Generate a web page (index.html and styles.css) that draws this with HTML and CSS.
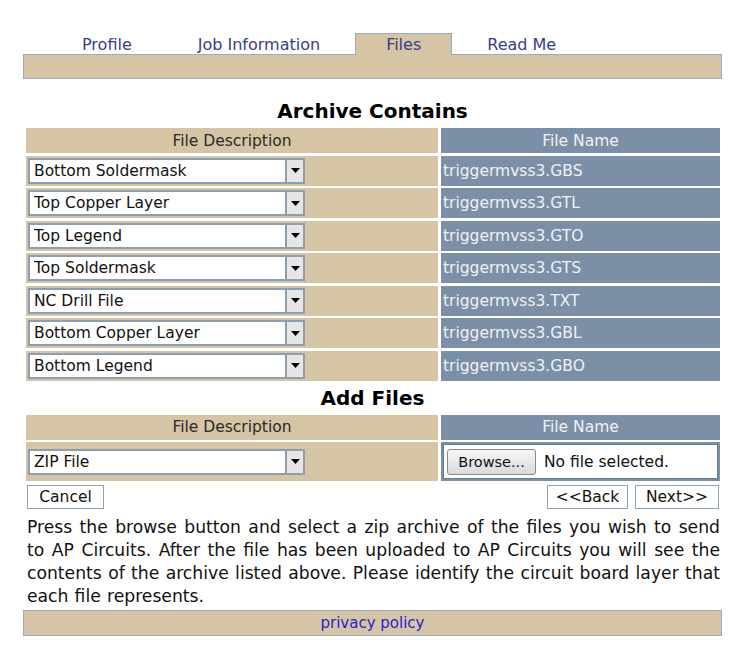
FILE: index.html
```html
<!DOCTYPE html>
<html>
<head>
<meta charset="utf-8">
<title>Files</title>
<link rel="stylesheet" href="styles.css">
</head>
<body>
<div class="page">
  <nav class="tabs">
    <a class="tab">Profile</a>
    <a class="tab">Job Information</a>
    <a class="tab active">Files</a>
    <a class="tab">Read Me</a>
  </nav>
  <div class="tabbar"></div>

  <h2 class="title">Archive Contains</h2>
  <div class="grid">
    <div class="cell head desc">File Description</div><div class="cell head name">File Name</div>
    <div class="cell desc"><div class="sel"><select><option>Bottom Soldermask</option></select><span class="arrow"><svg width="9" height="5" viewBox="0 0 9 5"><path d="M0 0h9L4.5 5z" fill="#000"/></svg></span></div></div><div class="cell name">triggermvss3.GBS</div>
    <div class="cell desc"><div class="sel"><select><option>Top Copper Layer</option></select><span class="arrow"><svg width="9" height="5" viewBox="0 0 9 5"><path d="M0 0h9L4.5 5z" fill="#000"/></svg></span></div></div><div class="cell name">triggermvss3.GTL</div>
    <div class="cell desc"><div class="sel"><select><option>Top Legend</option></select><span class="arrow"><svg width="9" height="5" viewBox="0 0 9 5"><path d="M0 0h9L4.5 5z" fill="#000"/></svg></span></div></div><div class="cell name">triggermvss3.GTO</div>
    <div class="cell desc"><div class="sel"><select><option>Top Soldermask</option></select><span class="arrow"><svg width="9" height="5" viewBox="0 0 9 5"><path d="M0 0h9L4.5 5z" fill="#000"/></svg></span></div></div><div class="cell name">triggermvss3.GTS</div>
    <div class="cell desc"><div class="sel"><select><option>NC Drill File</option></select><span class="arrow"><svg width="9" height="5" viewBox="0 0 9 5"><path d="M0 0h9L4.5 5z" fill="#000"/></svg></span></div></div><div class="cell name">triggermvss3.TXT</div>
    <div class="cell desc"><div class="sel"><select><option>Bottom Copper Layer</option></select><span class="arrow"><svg width="9" height="5" viewBox="0 0 9 5"><path d="M0 0h9L4.5 5z" fill="#000"/></svg></span></div></div><div class="cell name">triggermvss3.GBL</div>
    <div class="cell desc"><div class="sel"><select><option>Bottom Legend</option></select><span class="arrow"><svg width="9" height="5" viewBox="0 0 9 5"><path d="M0 0h9L4.5 5z" fill="#000"/></svg></span></div></div><div class="cell name">triggermvss3.GBO</div>
  </div>

  <h2 class="title title-add">Add Files</h2>
  <div class="grid grid-add">
    <div class="cell head desc">File Description</div><div class="cell head name">File Name</div>
    <div class="cell desc tall"><div class="sel"><select><option>ZIP File</option></select><span class="arrow"><svg width="9" height="5" viewBox="0 0 9 5"><path d="M0 0h9L4.5 5z" fill="#000"/></svg></span></div></div>
    <div class="cell name tall"><div class="filebox"><button class="browse">Browse...</button><span class="nofile">No file selected.</span></div></div>
  </div>

  <div class="actions">
    <button class="btn btn-cancel">Cancel</button>
    <div class="nav-btns">
      <button class="btn btn-back">&lt;&lt;Back</button>
      <button class="btn btn-next">Next&gt;&gt;</button>
    </div>
  </div>

  <p class="help">Press the browse button and select a zip archive of the files you wish to send to AP Circuits. After the file has been uploaded to AP Circuits you will see the contents of the archive listed above. Please identify the circuit board layer that each file represents.</p>

  <div class="footer"><a class="privacy" href="#">privacy policy</a></div>
</div>
</body>
</html>
```

FILE: styles.css
```css
html, body {
  margin: 0;
  padding: 0;
  background: #ffffff;
}
body {
  font-family: "DejaVu Sans", Verdana, sans-serif;
  font-size: 15.5px;
  color: #222;
}
.page {
  width: 699px;
  margin-left: 23px;
  padding-top: 33px;
}
.tabs {
  display: flex;
  gap: 4px;
  padding-left: 28px;
  height: 21px;
  align-items: flex-end;
}
.tab {
  display: block;
  padding: 0 31px;
  height: 21px;
  line-height: 23px;
  color: #3b3b8c;
  font-size: 16px;
  box-sizing: border-box;
}
.tab.active {
  background: #d6c5a5;
  border: 1px solid #9aabbf;
  border-bottom: none;
  padding: 0 30px;
  height: 22px;
  line-height: 22px;
  margin-bottom: -1px;
  position: relative;
  z-index: 1;
}
.tabbar {
  height: 25px;
  box-sizing: border-box;
  background: #d6c5a5;
  border: 1px solid #9aabbf;
}
.title {
  margin: 0;
  text-align: center;
  font-size: 20px;
  font-weight: bold;
  color: #000;
  line-height: 24px;
  padding-top: 20px;
}
.title-add {
  padding-top: 6px;
  line-height: 22px;
}
.grid {
  display: grid;
  grid-template-columns: 412px 279px;
  grid-auto-rows: 30px;
  grid-template-rows: 25px;
  column-gap: 3px;
  row-gap: 2.5px;
  margin: 5px 0 0 3px;
}
.grid-add {
  margin-top: 6px;
  grid-auto-rows: 39px;
}
.cell {
  display: flex;
  align-items: center;
}
.head {
  justify-content: center;
  font-size: 15.5px;
}
.desc {
  background: #d6c5a5;
  color: #2a2a2a;
  padding-left: 2px;
}
.head.desc {
  padding-left: 0;
}
.name {
  background: #7b90a6;
  color: #eef2f6;
  padding-left: 2px;
}
.head.name {
  padding-left: 0;
}
.sel {
  position: relative;
  width: 277px;
  height: 26px;
}
.sel select {
  -webkit-appearance: none;
  appearance: none;
  display: block;
  width: 277px;
  height: 26px;
  box-sizing: border-box;
  border: 2px solid #8e9db0;
  border-radius: 0;
  background: #fff;
  font-family: "DejaVu Sans", Verdana, sans-serif;
  font-size: 15.5px;
  color: #111;
  padding: 0 0 0 4px;
  margin: 0;
}
.sel .arrow {
  position: absolute;
  right: 2px;
  top: 2px;
  width: 18px;
  height: 22px;
  box-sizing: border-box;
  background: #e6e6e6;
  border-left: 2px solid #8e9db0;
  display: flex;
  align-items: center;
  justify-content: center;
  pointer-events: none;
}
.filebox {
  display: flex;
  align-items: center;
  gap: 8px;
  width: 275px;
  height: 35px;
  box-sizing: border-box;
  background: #fff;
  border: 1px solid #667c94;
  padding-left: 3px;
}
.browse {
  font-family: "DejaVu Sans", Verdana, sans-serif;
  font-size: 14.5px;
  color: #111;
  height: 26px;
  width: 89px;
  padding: 0;
  border: 1px solid #8a8a8a;
  border-radius: 3px;
  background: linear-gradient(#f7f7f7, #dadada);
}
.nofile {
  color: #111;
  font-size: 15.5px;
}
.actions {
  display: flex;
  justify-content: space-between;
  margin-top: 3.5px;
  padding: 0 3px 0 4px;
}
.nav-btns {
  display: flex;
  gap: 7px;
}
.btn {
  font-family: "DejaVu Sans", Verdana, sans-serif;
  font-size: 15.5px;
  color: #111;
  height: 24px;
  padding: 0;
  background: #fff;
  border: 1px solid #8ea2b8;
  border-radius: 0;
  margin: 0;
}
.btn-cancel { width: 77px; }
.btn-back { width: 81px; }
.btn-next { width: 84px; }
.help {
  margin: 7px 2px 0 4px;
  font-family: "DejaVu Sans", Verdana, sans-serif;
  font-size: 17.2px;
  word-spacing: 0.7px;
  line-height: 23px;
  text-align: justify;
  color: #111;
}
.footer {
  margin-top: 2px;
  height: 26px;
  box-sizing: border-box;
  background: #d6c5a5;
  border: 1px solid #9aabbf;
  text-align: center;
  line-height: 24px;
}
.privacy {
  color: #2323d0;
  text-decoration: none;
  font-size: 15px;
}
```
